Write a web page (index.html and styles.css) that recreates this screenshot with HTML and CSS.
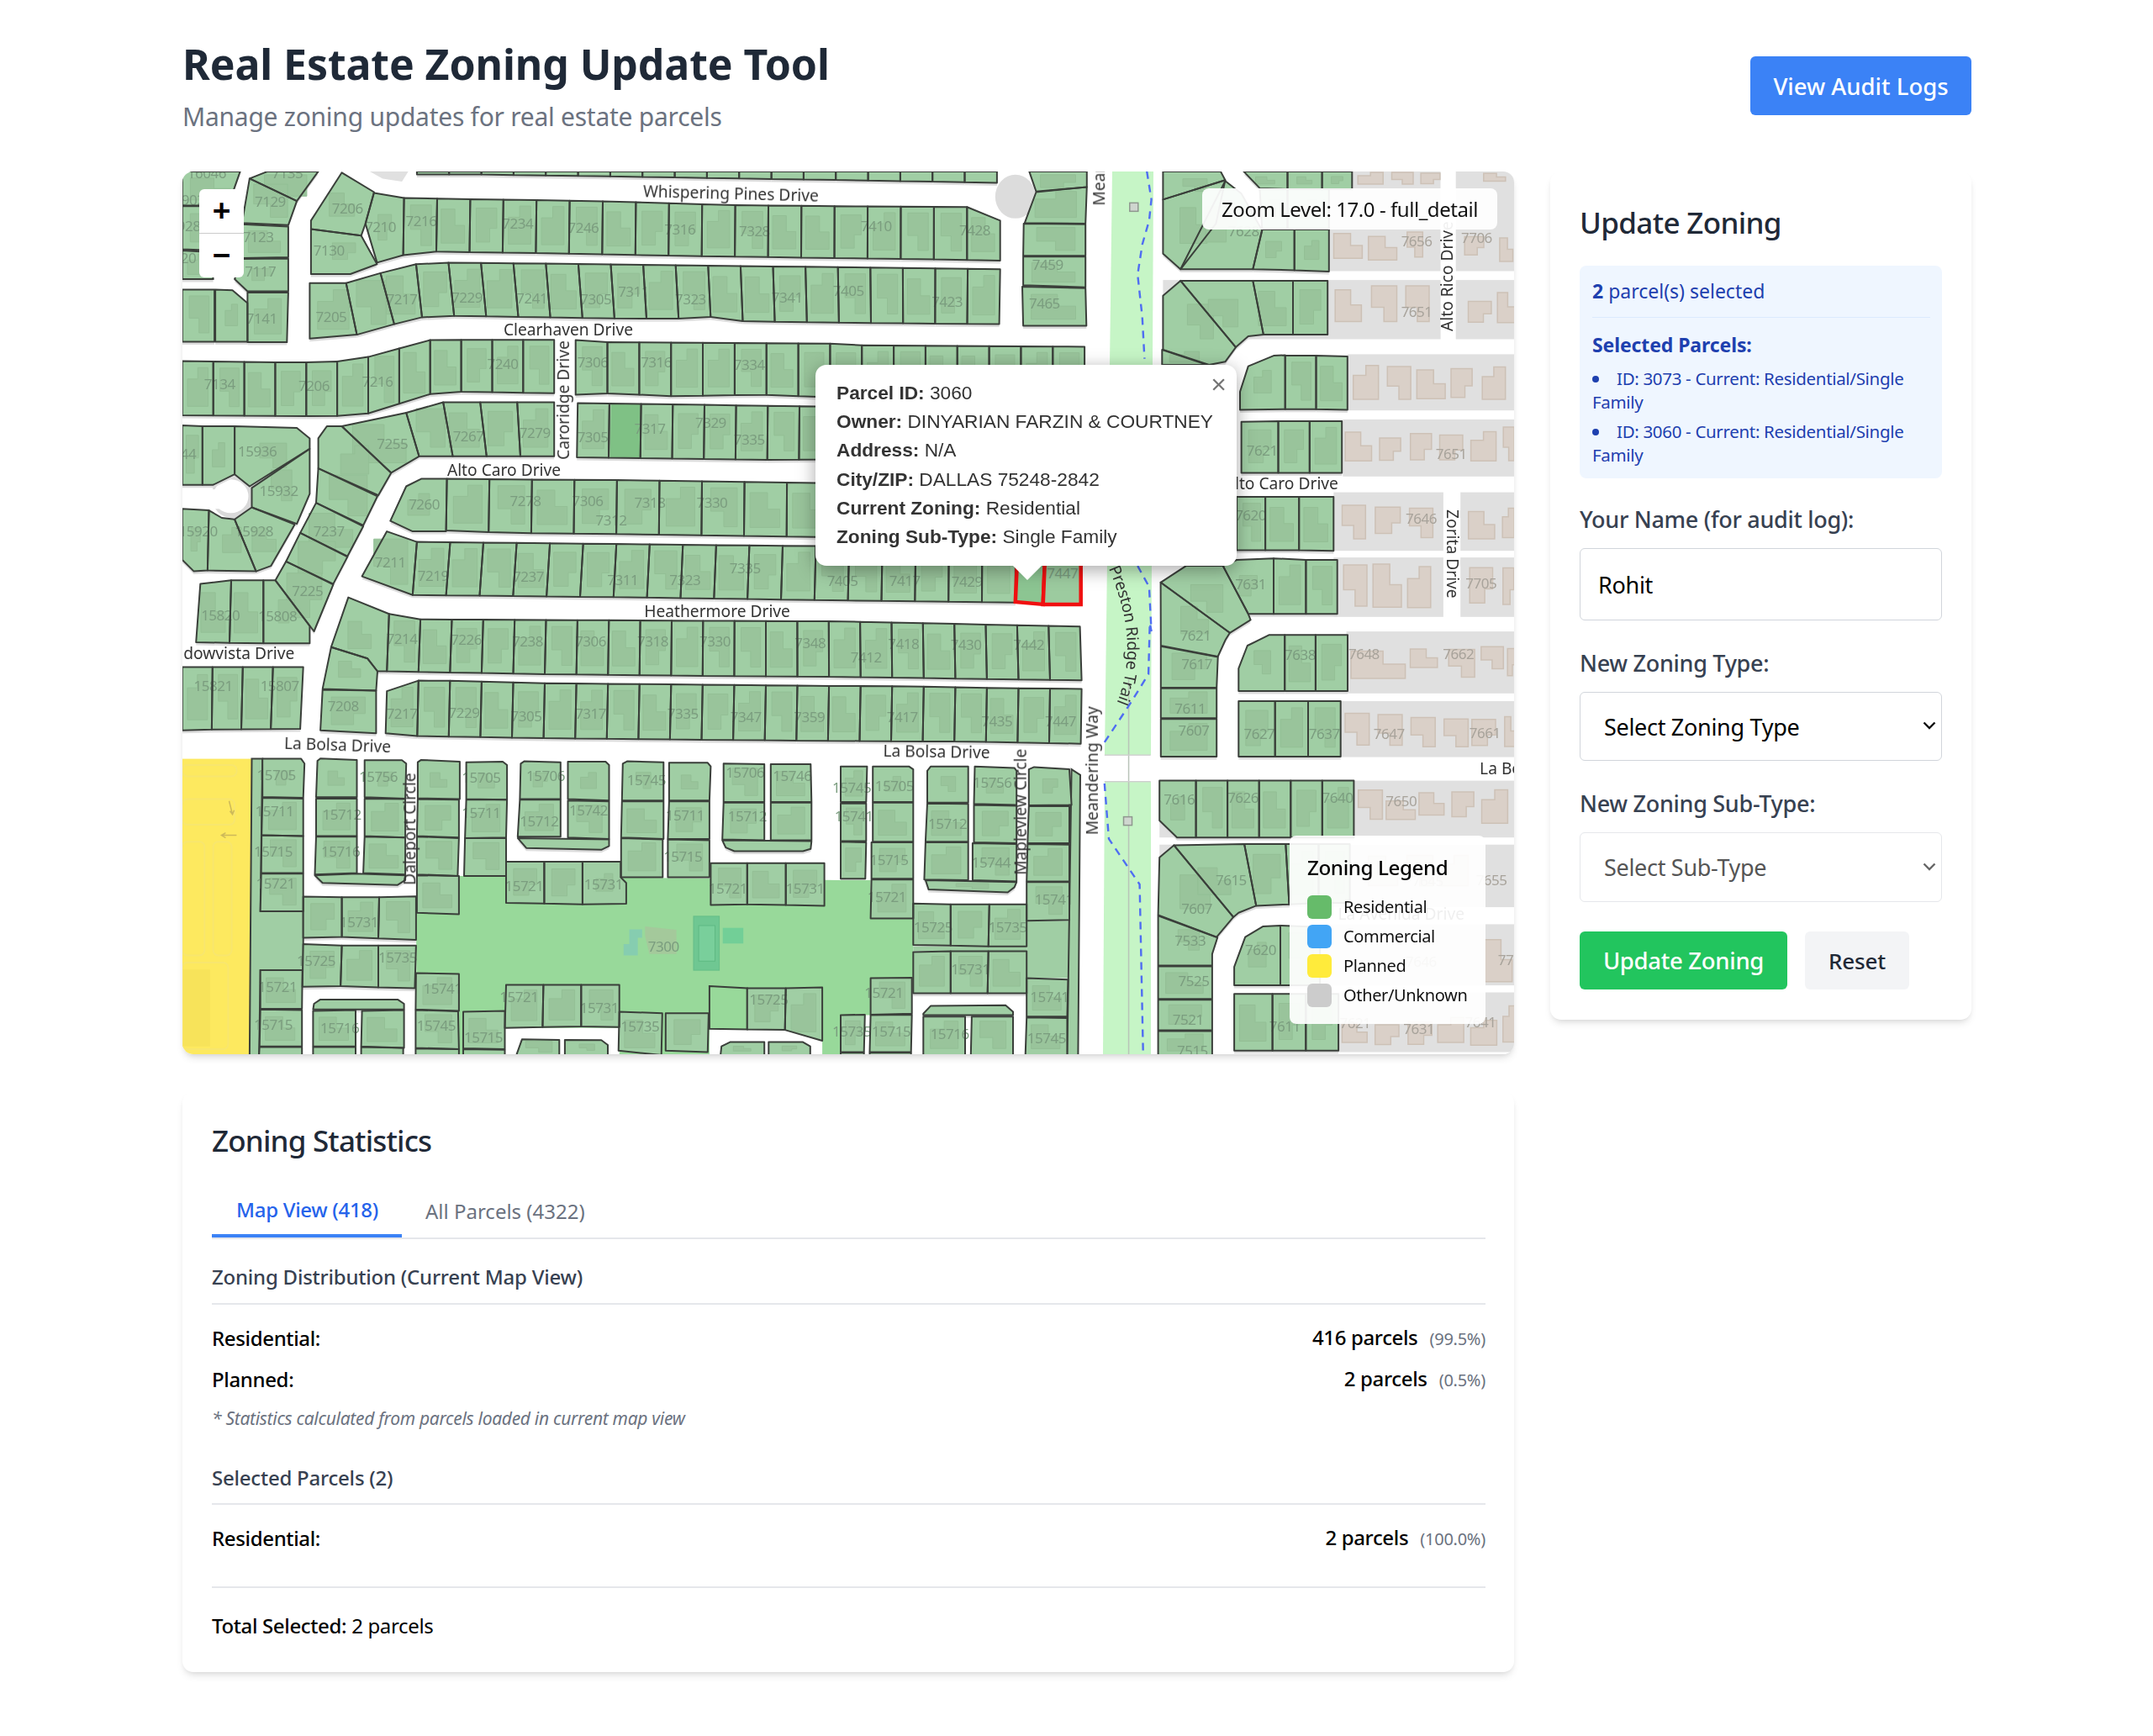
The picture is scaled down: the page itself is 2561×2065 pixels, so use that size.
FILE: index.html
```html
<!DOCTYPE html>
<html lang="en">
<head>
<meta charset="utf-8">
<title>Real Estate Zoning Update Tool</title>
<link rel="stylesheet" href="styles.css">
</head>
<body>
<div class="page">
  <header class="top">
    <div class="top-text">
      <h1>Real Estate Zoning Update Tool</h1>
      <p>Manage zoning updates for real estate parcels</p>
    </div>
    <button class="audit">View Audit Logs</button>
  </header>
  <div class="layout">
    <div class="left">
      <section class="map">
        <svg id="tiles" class="tiles" viewBox="217 203 1584 1050" xmlns="http://www.w3.org/2000/svg"></svg>
        <div class="zoomctl"><a class="zbtn">+</a><a class="zbtn">−</a></div>
        <div class="zoomlabel">Zoom Level: 17.0 - full_detail</div>
        <div class="popup">
          <span class="popup-close">×</span>
          <p><strong>Parcel ID:</strong> 3060</p>
          <p><strong>Owner:</strong> DINYARIAN FARZIN &amp; COURTNEY</p>
          <p><strong>Address:</strong> N/A</p>
          <p><strong>City/ZIP:</strong> DALLAS 75248-2842</p>
          <p><strong>Current Zoning:</strong> Residential</p>
          <p><strong>Zoning Sub-Type:</strong> Single Family</p>
        </div>
        <div class="legend">
          <h4>Zoning Legend</h4>
          <div class="leg-row"><i class="sw sw-res"></i>Residential</div>
          <div class="leg-row"><i class="sw sw-com"></i>Commercial</div>
          <div class="leg-row"><i class="sw sw-pla"></i>Planned</div>
          <div class="leg-row"><i class="sw sw-oth"></i>Other/Unknown</div>
        </div>
      </section>
      <section class="stats card">
        <h3>Zoning Statistics</h3>
        <div class="tabs">
          <a class="tab active">Map View (418)</a>
          <a class="tab">All Parcels (4322)</a>
        </div>
        <h4 class="sub first">Zoning Distribution (Current Map View)</h4>
        <div class="stat gap-first"><b>Residential:</b><span><b>416 parcels</b><small>(99.5%)</small></span></div>
        <div class="stat gap-next"><b>Planned:</b><span><b>2 parcels</b><small>(0.5%)</small></span></div>
        <p class="note">* Statistics calculated from parcels loaded in current map view</p>
        <h4 class="sub second">Selected Parcels (2)</h4>
        <div class="stat gap-sel"><b>Residential:</b><span><b>2 parcels</b><small>(100.0%)</small></span></div>
        <div class="total"><b>Total Selected:</b> 2 parcels</div>
      </section>
    </div>
    <aside class="side card">
      <h3>Update Zoning</h3>
      <div class="selbox">
        <div class="selcount"><b>2</b> parcel(s) selected</div>
        <div class="sellist">
          <div class="seltitle">Selected Parcels:</div>
          <ul>
            <li>ID: 3073 - Current: Residential/Single Family</li>
            <li>ID: 3060 - Current: Residential/Single Family</li>
          </ul>
        </div>
      </div>
      <label class="lab lab-first" for="nm">Your Name (for audit log):</label>
      <input id="nm" class="field name" value="Rohit">
      <label class="lab" for="zt">New Zoning Type:</label>
      <div class="selwrap">
        <select id="zt" class="field sel"><option>Select Zoning Type</option></select>
        <svg class="chev" viewBox="0 0 16 10" width="16" height="10"><path d="M1.5 1.5 L8 8 L14.5 1.5" fill="none" stroke="#111" stroke-width="2.4"/></svg>
      </div>
      <label class="lab" for="zs">New Zoning Sub-Type:</label>
      <div class="selwrap">
        <select id="zs" class="field sel sel-off" disabled><option>Select Sub-Type</option></select>
        <svg class="chev" viewBox="0 0 16 10" width="16" height="10"><path d="M1.5 1.5 L8 8 L14.5 1.5" fill="none" stroke="#666" stroke-width="2.4"/></svg>
      </div>
      <div class="actions">
        <button class="btn-go">Update Zoning</button>
        <button class="btn-reset">Reset</button>
      </div>
    </aside>
  </div>
</div>
<script src="map.js"></script>
</body>
</html>
```
FILE: styles.css
```css
* { box-sizing: border-box; }
html, body { margin: 0; background: #fff; }
body { font-family: "Noto Sans", "Open Sans", sans-serif; color: #000; }
.page { width: 2128px; margin: 0 0 0 217px; padding-bottom: 77px; }

.top { display: flex; justify-content: space-between; align-items: center; padding-top: 47px; margin-bottom: 47px; }
.top-text h1 { margin: 0; font-size: 50px; line-height: 58px; font-weight: 700; color: #1f2937; letter-spacing: -.1px; }
.top-text p { margin: 16px 0 0; font-size: 30px; line-height: 36px; color: #6b7280; letter-spacing: -.25px; }
.audit { width: 263px; height: 70px; border: 0; border-radius: 6px; background: #3b82f6; color: #fff; font: 500 27.5px "Noto Sans", sans-serif; letter-spacing: 0; }

.layout { display: grid; grid-template-columns: 1584px 501px; column-gap: 43px; align-items: start; }
.card { background: #fff; border-radius: 13px; box-shadow: 0 6px 10px -2px rgba(0,0,0,.1), 0 3px 6px -3px rgba(0,0,0,.1); }

.map { position: relative; height: 1050px; border-radius: 13px; overflow: hidden; box-shadow: 0 6px 10px -2px rgba(0,0,0,.12), 0 3px 6px -3px rgba(0,0,0,.1); }
.tiles { display: block; width: 1584px; height: 1050px; background: #fff; }
.t-num { font: 17px "Noto Sans", sans-serif; fill: #7b9d7f; letter-spacing: -.5px; text-anchor: middle; dominant-baseline: middle; }
.t-numb { fill: #a8a39b; }
.t-st { font: 19.2px "Noto Sans", sans-serif; fill: #333; text-anchor: middle; dominant-baseline: middle; }
.t-soft { filter: blur(.4px); }

.zoomctl { position: absolute; left: 20px; top: 21px; width: 53px; height: 105px; background: #fff; border-radius: 6px; display: flex; flex-direction: column; }
.zbtn { flex: 1; display: flex; align-items: center; justify-content: center; padding-bottom: 2px; font: 700 37px/1 "Liberation Sans", sans-serif; color: #000; }
.zbtn:first-child { border-bottom: 1.6px solid #ccc; }

.zoomlabel { position: absolute; left: 1213px; top: 20px; width: 351px; height: 49px; display: flex; align-items: center; justify-content: center; background: rgba(255,255,255,.93); border-radius: 8px; font-size: 24px; letter-spacing: -.45px; color: #111; }

.popup { position: absolute; left: 753px; top: 230px; width: 501px; height: 239px; padding: 16px 20px 0 25px; background: #fff; border-radius: 13px; box-shadow: 0 5px 22px rgba(0,0,0,.35); font-family: "Liberation Sans", Arial, sans-serif; font-size: 22.7px; color: #333; }
.popup::after { content: ""; position: absolute; left: 235px; top: 239px; border-left: 17px solid transparent; border-right: 17px solid transparent; border-top: 17px solid #fff; }
.popup p { margin: 0; line-height: 34.2px; white-space: nowrap; }
.popup strong { font-weight: 700; }
.popup-close { position: absolute; right: 12px; top: 5px; font: 32px/36px "Liberation Sans", sans-serif; color: #757575; }

.legend { position: absolute; left: 1317px; top: 790px; width: 233px; height: 224px; padding: 21px 21px; background: rgba(255,255,255,.92); border-radius: 8px; font-size: 20px; color: #111; }
.legend h4 { margin: 0 0 12px; font-size: 24.2px; line-height: 34px; font-weight: 500; letter-spacing: -.4px; color: #000; }
.leg-row { display: flex; align-items: center; gap: 14px; height: 35px; letter-spacing: -.35px; white-space: nowrap; }
.sw { width: 29px; height: 28px; border-radius: 6px; flex: none; }
.sw-res { background: #66bb6a; }
.sw-com { background: #42a5f5; }
.sw-pla { background: #ffeb3b; }
.sw-oth { background: #cccccc; }

.stats { margin-top: 45px; height: 690px; padding: 36px 34px 0 35px; }
.stats h3 { margin: 0; font-size: 35px; line-height: 44px; font-weight: 500; color: #1f2937; letter-spacing: -.82px; }
.tabs { display: flex; margin-top: 29px; height: 66px; border-bottom: 2px solid #e5e7eb; }
.tab { display: flex; align-items: center; height: 64px; padding: 0 28px; font-size: 24px; color: #6b7280; letter-spacing: 0; }
.tab.active { color: #2563eb; border-bottom: 4px solid #3b82f6; padding: 0 28px 0 29px; font-weight: 500; letter-spacing: -.3px; }
.sub { margin: 0; font-size: 24px; line-height: 34px; font-weight: 500; color: #374151; letter-spacing: -.22px; padding-bottom: 14px; border-bottom: 2px solid #e5e7eb; }
.sub.first { margin-top: 28px; }
.sub.second { margin-top: 39px; padding-bottom: 13px; }
.stat { display: flex; justify-content: space-between; align-items: center; font-size: 24px; line-height: 36px; letter-spacing: -.35px; }
.stat b, .total b { font-weight: 500; }
.stat small { font-size: 20px; color: #6b7280; margin-left: 14px; letter-spacing: -.25px; }
.gap-first { margin-top: 21px; }
.gap-next { margin-top: 11px; }
.gap-sel { margin-top: 21px; }
.note { margin: 12px 0 0; font-size: 21px; line-height: 30px; font-style: italic; color: #6b7280; letter-spacing: -.3px; }
.total { margin-top: 38px; padding-top: 28px; border-top: 2px solid #e5e7eb; font-size: 24px; line-height: 34px; letter-spacing: -.35px; }

.side { padding: 39px 35px 35px; height: 1009px; }
.side h3 { margin: 0; font-size: 35px; line-height: 44px; font-weight: 500; color: #1f2937; letter-spacing: -.65px; }
.selbox { margin-top: 29px; height: 253px; padding: 14px 14px 0 15px; background: #eff6ff; border-radius: 8px; color: #1e40af; }
.selcount { font-size: 23px; line-height: 32px; letter-spacing: 0; padding-bottom: 15px; border-bottom: 1.6px solid #dbeafe; }
.selcount b { font-weight: 700; }
.sellist { margin-top: 17px; }
.seltitle { font-size: 23px; line-height: 30px; font-weight: 700; letter-spacing: -.1px; }
.sellist ul { margin: 11px 0 0; padding: 0; list-style: none; }
.sellist li { font-size: 20.5px; line-height: 28px; letter-spacing: -.32px; margin-bottom: 7px; }
.sellist li::before { content: ""; display: inline-block; width: 8px; height: 8px; border-radius: 50%; background: #1e40af; margin: 0 21px 3px 0; }

.lab { display: block; margin-top: 34px; font-size: 27px; line-height: 34px; font-weight: 500; color: #374151; letter-spacing: -.3px; }
.lab-first { margin-top: 32px; }
.field { display: block; width: 431px; margin-top: 17px; background: #fff; border: 1.6px solid #d1d5db; border-radius: 6px; font-family: "Noto Sans", sans-serif; font-size: 27px; letter-spacing: -.3px; color: #000; }
.name { height: 86px; padding: 0 21px; }
.selwrap { position: relative; width: 431px; margin-top: 17px; }
.sel { appearance: none; -webkit-appearance: none; margin: 0; height: 82px; padding: 0 40px 0 28px; }
.sel-off { height: 83px; color: #555; border-color: #e5e7eb; opacity: 1; }
.chev { position: absolute; right: 7px; top: 50%; margin-top: -6px; }
.actions { display: flex; gap: 21px; margin-top: 35px; }
.actions button { height: 69px; border: 0; border-radius: 6px; font: 500 26px "Noto Sans", sans-serif; letter-spacing: -.2px; }
.actions .btn-go { width: 247px; background: #22c55e; color: #fff; font-size: 27.5px; letter-spacing: -.3px; }
.btn-reset { width: 124px; background: #f3f4f6; color: #1f2937; }
```
FILE: map.js
```js
(function () {
  var A = function (x, y) { return [200 + x / 1.96, 190 + y / 2.8]; };
  var B = function (x, y) { return [950 + x / 1.823, 190 + y / 2.8]; };
  var C = function (x, y) { return [200 + x / 1.96, 740 + y / 2.958]; };
  var D = function (x, y) { return [1000 + x / 1.912, 740 + y / 2.958]; };
  var FILL = '#a0cea4', BLD = '#99c49b', PARK = '#98d99a', LAND = '#e0e0e0', BEIGE = '#dad0c8';
  var cells = [];

  function conv(Z, n) { var o = []; for (var i = 0; i < n.length; i += 2) o.push(Z(n[i], n[i + 1])); return o; }
  function ptsStr(p) { return p.map(function (q) { return q[0].toFixed(1) + ',' + q[1].toFixed(1); }).join(' '); }
  function add(p, opt) { cells.push({ p: p, o: opt || {} }); }
  function polys(Z, list, opt) { list.forEach(function (n) { add(conv(Z, n), opt); }); }
  function interp(line, x) {
    if (x <= line[0][0]) return line[0][1];
    for (var i = 1; i < line.length; i++) {
      if (x <= line[i][0]) {
        var a = line[i - 1], b = line[i];
        return a[1] + (b[1] - a[1]) * (x - a[0]) / (b[0] - a[0] || 1);
      }
    }
    return line[line.length - 1][1];
  }
  function row(t, b, n) {
    var tl = t[0][0], tr = t[t.length - 1][0], bl = b[0][0], br = b[b.length - 1][0];
    for (var i = 0; i < n; i++) {
      var x0 = tl + (tr - tl) * i / n, x1 = tl + (tr - tl) * (i + 1) / n;
      var y0 = bl + (br - bl) * i / n, y1 = bl + (br - bl) * (i + 1) / n;
      add([[x0, interp(t, x0)], [x1, interp(t, x1)], [y1, interp(b, y1)], [y0, interp(b, y0)]]);
    }
  }
  var SH = [
    [.12, .18, .55, .18, .55, .5, .85, .5, .85, .85, .12, .85],
    [.2, .1, .85, .1, .85, .85, .52, .85, .52, .55, .2, .55],
    [.15, .32, .5, .32, .5, .1, .85, .1, .85, .85, .15, .85],
    [.18, .15, .82, .15, .82, .55, .6, .55, .6, .82, .18, .82]
  ];
  function shape(x, y, w, h, k, inset) {
    var s = SH[k % 4], o = [];
    inset = inset || 1;
    for (var i = 0; i < s.length; i += 2) {
      o.push([x + w * (.5 + (s[i] - .5) * inset), y + h * (.5 + (s[i + 1] - .5) * inset)]);
    }
    return o;
  }

  /* ---------- north blocks ---------- */
  polys(A, [
    [33,36,168,36,140,150,33,150],[33,152,128,152,108,300,33,295],[33,300,100,305,105,395,33,395],
    [190,60,232,36,350,36,300,135],[190,60,300,135,280,215,172,208],[172,212,280,220,280,322,172,325],
    [172,328,280,326,280,435,185,435,155,395],[185,440,280,440,277,605,185,605],[110,430,150,432,185,475,185,603,110,603],[33,430,108,430,108,603,33,603],
    [405,40,480,105,460,210,450,250,333,228,333,200],[480,108,550,125,548,315,487,340,460,210],[333,228,450,250,487,345,425,378,333,378],
    [330,408,415,408,440,580,330,593],[415,408,495,375,527,545,440,580],[495,375,578,345,592,522,527,545],
    [405,885,555,840,585,985,520,1040],[33,882,80,885,80,1080,33,1080],[80,885,155,885,155,1045,105,1080,80,1080],
    [155,885,300,890,330,925,330,960,190,1085,155,1045],[330,960,330,1110,300,1210,195,1155,195,1090],
    [195,1155,295,1212,240,1350,205,1368,155,1195],[33,1160,95,1165,92,1365,60,1368,33,1330],[95,1165,125,1190,155,1195,205,1368,92,1365],
    [350,925,370,885,405,885,520,1040,490,1115,350,1025],[350,1025,488,1118,455,1215,345,1140],[345,1140,455,1218,418,1318,308,1240],[308,1240,418,1320,385,1410,275,1335],
    [275,1335,385,1412,340,1568,250,1398],
    [590,1060,650,1060,648,1235,570,1235,518,1200,555,1085],[510,1235,580,1270,570,1447,452,1385]
  ]);
  add([A(75,1410),A(147,1398),C(143,70),C(65,68)]);
  add([A(147,1398),A(222,1398),C(222,72),C(143,70)]);
  add([A(222,1398),A(250,1398),A(330,1550),C(330,72),C(222,72)]);
  row([A(580,36),A(1568,36),B(430,36)], [A(580,46),A(700,46),A(1000,52),A(1568,65),B(430,74)], 18);
  row([A(550,125),A(1000,135),A(1305,148),A(1568,152),B(380,155),B(437,200)], [A(548,315),A(620,303),A(850,308),A(1000,312),A(1230,318),A(1568,325),B(270,328),B(437,333)], 18);
  row([A(578,345),A(660,340),A(1000,345),A(1260,350),A(1568,355),B(437,362)], [A(592,522),A(660,517),A(1000,525),A(1180,527),A(1260,520),A(1330,535),A(1568,540),B(435,545)], 18);
  row([A(33,668),A(230,672),A(380,672),A(450,660),A(520,635),A(595,598),A(680,597),A(900,597)], [A(33,848),A(380,852),A(460,845),A(610,778),A(680,770),A(900,775)], 12);
  row([A(950,598),A(1030,605),A(1568,610),B(130,615),B(620,620)], [A(950,780),A(1030,775),A(1175,785),A(1390,780),A(1568,790),B(620,792)], 16);
  row([A(555,840),A(625,805),A(900,805)], [A(585,985),A(900,985)], 4);
  row([A(955,808),A(1568,820),B(620,826)], [A(953,988),A(1030,990),A(1390,997),A(1568,995),B(620,1000)], 16);
  row([A(650,1060),A(1100,1065),A(1568,1075),B(620,1082)], [A(648,1232),A(795,1240),A(1100,1245),A(1568,1255),B(620,1262)], 15);
  row([A(580,1270),A(1568,1285),B(470,1292)], [A(570,1447),A(1100,1455),A(1568,1465),B(250,1468),B(470,1472)], 18);
  row([A(515,1510),A(580,1528),A(1568,1535),B(610,1552)], [C(510,170),C(870,180),C(1168,185),C(1568,190),D(548,202)], 22);
  add([A(420,1455),A(515,1510),C(510,170),C(488,170),C(465,125),C(380,85)]);
  polys(C, [[380,85,465,125,488,170,485,238,360,232],[360,235,485,238,485,388,355,378]]);
  row([C(510,240),C(545,203),C(650,203),C(870,212),C(1568,222),D(105,222),D(390,230),D(548,232)], [C(507,388),C(580,398),C(870,405),C(1165,410),C(1568,415),D(320,418),D(546,425)], 22);
  row([C(33,155),C(315,155)], [C(33,378),C(70,375),C(308,373)], 4);
  polys(B, [
    [500,36,625,36,625,88,515,103],[515,105,625,88,622,210,490,208],[488,210,622,212,622,317,487,317],[487,320,622,320,622,422,487,415],[485,420,622,425,624,550,487,550]
  ]);

  /* ---------- south blocks ---------- */
  polys(C, [
    [220,478,310,478,318,495,315,615,220,612],[220,615,315,618,315,750,218,747],[218,747,315,750,315,880,217,880],[217,882,315,882,315,1015,215,1015],
    [348,485,355,477,440,482,440,613,345,613],[458,483,545,483,555,495,553,618,458,613],[345,618,440,618,440,750,345,750],[458,618,553,620,553,755,458,750],
    [345,752,440,752,440,880,342,885],[458,752,553,755,553,885,455,880],[342,888,440,882,553,888,553,905,535,922,360,915],
    [315,963,405,965,405,1105,315,1108],[405,965,492,965,490,1110,405,1105],[492,965,578,962,578,1115,490,1110],
    [582,490,590,482,680,488,680,620,582,617],[695,490,780,488,790,500,790,622,695,620],[582,620,678,622,678,755,580,750],[695,622,790,622,788,755,692,757],
    [580,752,678,757,675,890,580,885],[692,757,788,757,788,890,690,890],[580,888,678,890,678,1025,580,1020],
    [822,495,830,487,915,490,915,620,820,620],[932,488,1020,488,1028,500,1028,625,932,620],[820,622,915,622,915,752,815,752],[932,625,1028,628,1028,760,932,755],
    [815,757,1028,762,1028,785,1010,798,835,792],
    [788,840,877,840,877,987,788,985],[877,840,966,840,966,990,877,987],[966,840,1055,840,1055,895,1068,915,1068,988,966,990],
    [1060,495,1070,487,1155,490,1155,625,1058,625],[1168,492,1258,492,1265,505,1262,625,1168,625],[1058,628,1155,628,1155,760,1056,755],[1168,628,1262,628,1262,760,1165,760],
    [1056,757,1153,762,1153,895,1056,895],[1165,762,1262,765,1262,895,1165,895],
    [1295,495,1390,497,1390,630,1295,630],[1405,497,1498,497,1500,630,1405,630],[1295,632,1390,632,1390,765,1292,762],[1405,632,1500,632,1500,765,1405,765],
    [1292,765,1500,768,1498,795,1480,803,1320,803,1300,790],
    [1265,845,1350,845,1350,990,1265,992],[1350,845,1440,845,1440,992,1350,990],[1440,845,1530,845,1530,995,1440,992],
    [315,1130,405,1135,402,1278,313,1280],[405,1135,490,1135,490,1282,402,1278],[490,1135,578,1135,575,1285,490,1282],
    [215,1222,313,1222,312,1358,215,1358],[215,1360,312,1362,312,1490,213,1490],[213,1492,312,1492,312,1520,212,1520],
    [578,1232,678,1235,678,1365,577,1360],[577,1362,676,1367,678,1500,577,1495],[577,1498,678,1500,678,1520,577,1520],
    [688,1368,785,1365,785,1500,688,1497],[688,1500,785,1502,785,1520,688,1520],
    [788,1273,875,1273,873,1422,785,1425],[875,1273,963,1273,963,1420,873,1422],[963,1273,1052,1273,1052,1422,963,1420],
    [1052,1368,1152,1373,1150,1520,1050,1505],[1160,1373,1260,1373,1258,1510,1160,1505],
    [1350,1285,1440,1285,1438,1432,1350,1430],[1440,1285,1525,1282,1525,1470,1438,1432],
    [340,1340,355,1325,535,1325,550,1340,550,1360,338,1360],[338,1365,437,1362,437,1490,338,1490],[452,1365,550,1362,550,1495,450,1490],[338,1492,437,1492,437,1520,338,1520],[450,1492,548,1495,548,1520,450,1520],
    [825,1465,912,1467,912,1520,812,1520],[925,1467,1010,1468,1025,1485,1025,1520,925,1520],[1310,1475,1390,1475,1390,1520,1288,1520,1290,1490],[1400,1475,1480,1475,1497,1490,1497,1520,1400,1520]
  ]);
  polys(D, [
    [73,505,155,505,165,515,165,630,73,630],[0,505,60,505,58,630,0,630],[0,635,58,635,58,768,0,768],[73,632,165,632,165,770,73,770],[70,772,165,772,165,900,70,900],[0,770,58,772,56,900,0,900],
    [70,903,165,903,165,1040,68,1040],
    [197,520,205,505,290,505,290,632,197,632],[305,505,395,510,400,520,400,640,303,637],[197,635,290,637,290,770,193,770],[303,640,400,643,400,775,303,772],[193,772,290,772,290,905,190,903],[300,775,400,778,400,910,300,905],[193,905,400,912,395,930,380,948,200,938],
    [165,987,250,990,250,1135,165,1133],[250,990,338,990,336,1138,250,1135],[338,990,423,990,423,1138,336,1138],
    [165,1158,250,1155,250,1303,165,1303],[250,1155,336,1155,334,1303,250,1303],[336,1155,423,1155,423,1303,334,1303],
    [428,515,440,507,520,515,525,640,428,642],[428,645,520,645,520,775,425,775],[425,778,520,780,520,910,423,910],[423,912,520,912,520,1045,423,1048],
    [423,1250,517,1255,515,1385,423,1385],[423,1388,515,1390,515,1520,420,1520],
    [205,1347,375,1345,392,1368,392,1380,188,1380,188,1375],[188,1385,283,1385,283,1520,188,1520],[298,1385,392,1385,392,1520,296,1520],
    [68,1250,162,1248,162,1375,68,1378],[68,1380,162,1378,160,1510,66,1510],[0,1380,55,1378,53,1510,0,1510],[66,1512,160,1512,160,1520,66,1520],[0,1512,53,1512,53,1520,0,1520]
  ]);

  /* ---------- east blocks ---------- */
  polys(B, [
    [790,36,915,36,925,65,790,130],[790,130,925,65,905,210,828,362,790,310],[925,68,960,110,1005,232,985,362,828,362],[1005,230,1075,230,1075,365,985,362],[1075,230,1150,230,1150,370,1075,365],
    [1000,95,1060,95,1060,230,1005,230],[965,36,1060,36,1060,95,1000,92],[1060,36,1135,36,1135,95,1060,95],[1135,36,1200,36,1200,95,1135,95],[1060,95,1150,95,1150,230,1060,230],
    [790,450,828,400,948,622,925,670,890,680,790,630],[828,400,985,400,1008,580,975,585,948,622],[985,400,1072,400,1072,580,1008,580],[1072,400,1147,400,1147,580,1072,580],[788,630,885,680,788,680],
    [957,770,975,685,1030,650,1055,648,1055,828,957,830],[1055,650,1122,650,1122,828,1055,828],[1122,650,1190,652,1190,830,1122,828],
    [960,870,1040,868,1040,1040,960,1040],[1040,868,1108,868,1108,1040,1040,1040],[1108,868,1178,868,1178,1040,1108,1040],
    [950,1120,1012,1120,1012,1298,950,1298],[1012,1120,1085,1120,1085,1298,1012,1298],[1085,1120,1160,1120,1160,1300,1085,1298],
    [950,1330,1030,1325,1030,1510,975,1510,920,1350],[1030,1325,1100,1330,1100,1510,1030,1510],[1100,1330,1168,1330,1168,1510,1100,1510]
  ]);
  add([B(785,1405),B(840,1350),B(920,1350),B(975,1510),B(980,1530),D(885,35)]);
  add([B(785,1405),D(885,35),D(875,60),D(858,118),D(728,80)]);
  polys(D, [
    [728,82,858,120,855,228,728,228],[728,230,855,230,855,335,728,335],[728,338,855,338,855,470,728,470],
    [905,240,905,160,925,80,975,42,1010,42,1010,240],[1010,42,1080,42,1080,240,1010,240],[1080,42,1153,42,1153,240,1080,240],
    [905,275,988,275,988,470,905,470],[988,275,1063,275,1063,470,988,470],[1063,275,1137,275,1137,470,1063,470],
    [725,825,758,782,893,1035,855,1105,722,1028],[758,782,918,778,945,995,905,1020,893,1035],[918,778,1012,778,1020,990,945,995],[1012,778,1087,778,1087,985,1020,990],[1087,778,1158,778,1158,985,1087,985],
    [722,1030,857,1107,845,1165,845,1205,722,1205],[722,1208,845,1208,845,1323,722,1323],[722,1326,845,1326,845,1433,722,1433],[722,1436,845,1436,845,1520,722,1520],
    [895,1275,895,1210,920,1105,960,1068,1000,1065,1000,1275],[1000,1065,1090,1070,1090,1275,1000,1275],
    [895,1305,982,1305,982,1505,895,1505],[982,1305,1058,1305,1058,1505,982,1505],[1058,1305,1132,1305,1132,1505,1058,1505]
  ]);
  polys(D, [[725,555,808,555,808,755,765,755,725,695]]);
  row([D(808,555),D(1167,555)], [D(808,755),D(1167,755)], 5);

  /* ---------- svg layers ---------- */
  var s = [];
  function rect(Z, x1, y1, x2, y2, fill, extra) {
    var a = Z(x1, y1), b = Z(x2, y2);
    s.push('<rect x="' + a[0].toFixed(1) + '" y="' + a[1].toFixed(1) + '" width="' + (b[0] - a[0]).toFixed(1) + '" height="' + (b[1] - a[1]).toFixed(1) + '" fill="' + fill + '" ' + (extra || '') + '/>');
  }
  function poly(p, fill, extra) { s.push('<polygon points="' + ptsStr(p) + '" fill="' + fill + '" ' + (extra || '') + '/>'); }

  /* land */
  [[1140,36,1392,368],[1425,36,1555,368],[790,398,1392,595],[1425,398,1555,595],[1190,645,1555,832],[1180,862,1555,1052],[1160,1105,1398,1300],[1435,1105,1555,1300],[1160,1322,1398,1520],[1435,1322,1555,1520]].forEach(function (r) { rect(B, r[0], r[1], r[2], r[3], LAND); });
  [[1150,30,1535,248],[1135,275,1535,472],[725,555,1535,755],[725,780,1535,1000],[1090,1060,1535,1275],[1130,1300,1535,1510]].forEach(function (r) { rect(D, r[0], r[1], r[2], r[3], LAND); });
  poly(conv(A, [470,36,560,36,545,70,500,60]), LAND);
  /* cul-de-sacs */
  var cd = B(470, 120);
  s.push('<ellipse cx="' + cd[0] + '" cy="' + cd[1] + '" rx="24" ry="26" fill="#dcdcdc"/>');
  var ce = A(150, 1118);
  s.push('<ellipse cx="' + ce[0] + '" cy="' + ce[1] + '" rx="25" ry="26" fill="#d9d9d9"/><ellipse cx="' + (ce[0] - 2) + '" cy="' + ce[1] + '" rx="21" ry="20" fill="#fff"/>');
  rect(A, 33, 1095, 130, 1160, '#fff');

  /* beige east buildings */
  function beige(Z, str) {
    str.split(';').forEach(function (e, i) {
      var v = e.trim().split(/\s+/).map(Number), a = Z(v[0], v[1]), b = Z(v[0] + v[2], v[1] + v[3]);
      poly(shape(a[0], a[1], b[0] - a[0], b[1] - a[1], i + v[0], 1.3), BEIGE, 'stroke="#cdc1b6" stroke-width="1.5"');
    });
  }
  beige(B, '1210 40 60 40;1280 40 55 40;1345 40 50 40;1485 40 50 30;1160 235 65 95;1235 245 65 90;1315 240 40 85;1440 250 50 70;1520 250 30 90;1163 420 60 122;1235 420 65 122;1310 420 60 122;1447 465 60 80;1515 430 40 115;1200 685 60 115;1270 688 60 112;1340 688 65 110;1410 688 55 110;1480 690 55 110;1185 895 60 110;1255 920 55 85;1322 905 55 100;1385 910 60 95;1455 905 60 100;1525 890 28 115;1172 1150 60 115;1245 1150 65 100;1318 1160 60 100;1452 1160 60 105;1525 1160 28 100;1175 1350 60 140;1245 1330 65 165;1318 1355 55 140;1450 1350 60 135;1525 1350 28 140');
  beige(D, '1160 90 130 110;1295 85 65 75;1375 95 70 100;1450 85 60 80;1515 85 20 110;1140 320 65 115;1215 325 65 110;1290 335 65 105;1365 340 65 100;1430 335 65 105;1510 320 25 120;1170 590 65 105;1240 620 70 75;1315 590 60 90;1385 590 60 100;1455 590 65 120;1200 810 70 120;1280 820 70 110;1360 820 70 110;1465 1100 65 170;1140 1400 60 80;1210 1410 65 80;1285 1400 65 90;1355 1390 65 90;1430 1400 65 90;1505 1350 30 130');

  /* shadow of parcel blocks */
  cells.forEach(function (c) {
    poly(c.p.map(function (q) { return [q[0], q[1] + 3.5]; }), '#dcdcdc');
  });

  /* park, trail and planned area */
  poly(conv(C, [580,890,790,890,1568,905]).concat(conv(D, [68,905,68,1040,165,1040,165,1250,68,1250,68,1380,0,1380,0,1520])).concat(conv(C, [1100,1520,580,1520,578,1020])), PARK);
  rect(C, 785, 1425, 1052, 1520, '#fff');
  rect(C, 1262, 1430, 1525, 1520, '#fff');
  poly(conv(D, [165,1138,423,1138,423,1155,165,1155]), FILL);
  poly(conv(D, [423,1048,540,1048,540,1250,423,1250]), FILL);
  poly(conv(C, [1262,1278,1350,1285,1350,1430,1262,1428]), PARK, 'stroke="#3a3f3a" stroke-width="2"');

  poly([[1323,203],[1372,203],[1369,897],[1314,897]], '#c6f5c6');
  poly([[1314,929],[1369,929],[1369,1253],[1312,1253]], '#c6f5c6');
  var gl = D(655, 200), gl2 = D(655, 1520);
  s.push('<path d="M' + gl[0] + ' ' + gl[1] + 'V' + gl2[1] + '" stroke="#b9c4b9" stroke-width="1.5" fill="none"/>');
  rect(D, 600, 463, 705, 467, '#cfcfcf');
  rect(D, 600, 556, 705, 560, '#cfcfcf');

  rect(C, 33, 478, 195, 1520, '#fde95f');
  rect(C, 33, 1220, 98, 1490, '#f7e35a');
  s.push('<g fill="none" stroke="#f8e66e" stroke-width="2">');
  [[33,500,160,540],[33,620,155,710],[33,770,85,1170],[105,770,148,1170],[33,1195,140,1500]].forEach(function (r) { var a = C(r[0], r[1]), b = C(r[2], r[3]); s.push('<rect x="' + a[0].toFixed(1) + '" y="' + a[1].toFixed(1) + '" width="' + (b[0] - a[0]).toFixed(1) + '" height="' + (b[1] - a[1]).toFixed(1) + '" rx="6"/>'); });
  s.push('</g>');
  var ar1 = C(150, 650), ar2 = C(140, 747);
  s.push('<path d="M' + (ar1[0] - 4) + ' ' + (ar1[1] - 8) + 'L' + ar1[0] + ' ' + (ar1[1] + 8) + 'M' + (ar1[0] - 3) + ' ' + (ar1[1] + 4) + 'L' + ar1[0] + ' ' + (ar1[1] + 8) + 'L' + (ar1[0] + 2) + ' ' + (ar1[1] + 3) + 'M' + (ar2[0] + 10) + ' ' + ar2[1] + 'H' + (ar2[0] - 8) + 'M' + (ar2[0] - 3) + ' ' + (ar2[1] - 3) + 'L' + (ar2[0] - 8) + ' ' + ar2[1] + 'L' + (ar2[0] - 3) + ' ' + (ar2[1] + 3) + '" stroke="#cdb95a" stroke-width="1.5" fill="none"/>');

  /* park details */
  poly(conv(C, [1075,1078,1105,1078,1105,1108,1095,1108,1095,1170,1062,1170,1062,1130,1075,1130]), '#86cdb0');
  poly(conv(C, [1112,1068,1185,1080,1185,1165,1122,1165,1112,1100]), '#a4c99b');
  rect(C, 1225, 1032, 1285, 1222, '#6fc792', 'stroke="#65be88" stroke-width="1"');
  rect(C, 1237, 1065, 1275, 1190, '#79cf9b', 'stroke="#5fb983" stroke-width="1"');
  rect(C, 1293, 1073, 1341, 1128, '#72cf97');

  /* strip parcel next to the planned area */
  poly(conv(C, [195,478,220,478,215,1015,315,1015,315,1222,215,1222,212,1520,190,1520]), FILL, 'stroke="#3a3f3a" stroke-width="2"');
  poly(conv(D, [525,515,545,535,540,1520,515,1520]), FILL, 'stroke="#3a3f3a" stroke-width="2"');

  /* parcel fills and their buildings */
  cells.forEach(function (c) { poly(c.p, FILL); });
  cells.forEach(function (c, i) {
    var xs = c.p.map(function (q) { return q[0]; }), ys = c.p.map(function (q) { return q[1]; });
    var x0 = Math.min.apply(null, xs), x1 = Math.max.apply(null, xs), y0 = Math.min.apply(null, ys), y1 = Math.max.apply(null, ys);
    var w = x1 - x0, h = y1 - y0;
    if (w < 14 || h < 14) return;
    var ins = c.p.length > 4 ? .55 : .95;
    if (x1 > 1380 && y0 < 280) ins = .6;
    poly(shape(x0, y0, w, h, (i * 7 + (i >> 2)), ins), BLD, 'stroke="#93bf95" stroke-width="1"');
  });
  poly([A(1033,812), A(1103,812), A(1103,990), A(1030,990)], '#7fc185');

  /* house numbers */
  function nums(Z, str, cls) {
    str.split(';').forEach(function (e) {
      var v = e.trim().split(/\s+/), p = Z(+v[1], +v[2]);
      s.push('<text class="t-num ' + (cls || '') + '" x="' + p[0].toFixed(1) + '" y="' + p[1].toFixed(1) + '">' + v[0] + '</text>');
    });
  }
  s.push('<g class="t-soft">');
  nums(A, '16046 90 45;7135 278 45;15902 40 135;15928 30 222;15920 20 330;7129 238 140;7123 210 260;7117 215 375;7141 218 530;7206 418 165;7210 495 225;7216 590 205;7234 815 215;7246 968 228;7316 1193 233;7328 1367 240;7130 375 303;7205 380 525;7217 545 465;7229 697 460;7241 848 463;7305 997 467;7311 1085 440;7323 1218 465;7341 1443 460;7134 120 750;7206 340 755;7216 488 740;7240 780 682;7306 990 677;7316 1138 677;7334 1355 685;7255 523 947;7267 700 923;7279 855 912;7305 990 925;7317 1123 897;7329 1265 877;7335 1355 933;15944 20 980;15936 208 973;15932 258 1105;15928 200 1240;15920 70 1238;7237 375 1240;7225 325 1437;15820 122 1520;15808 255 1522;7260 597 1150;7278 833 1138;7306 978 1137;7312 1033 1203;7318 1123 1143;7330 1268 1145;7211 518 1343;7219 618 1388;7237 840 1390;7311 1060 1400;7323 1205 1400;7335 1345 1362');
  nums(B, '7410 168 222;7428 382 237;7459 540 350;7405 108 437;7423 322 475;7465 533 480;7628 965 240;7621 1005 970;7620 980 1185;7631 980 1415;7405 95 1405;7417 230 1403;7429 365 1408');
  nums(C, '7214 545 60;7226 695 62;7238 838 70;7306 985 70;7318 1130 70;7330 1275 70;7348 1497 75;15821 105 225;15807 260 225;7208 408 298;7217 545 325;7229 690 320;7305 835 333;7317 985 325;7335 1200 325;7347 1347 335;7359 1495 335;15705 252 540;15756 490 545;15705 730 550;15706 880 543;15745 1115 558;15706 1345 532;15746 1455 542;15711 248 667;15712 405 680;15711 730 672;15712 865 702;15742 980 665;15711 1205 682;15712 1350 685;15715 245 808;15716 402 810;15715 1200 827;15721 250 920;15721 830 930;15731 1015 925;15721 1305 938;15731 1485 938;15731 445 1058;7300 1155 1142;15725 345 1193;15735 535 1183;15721 255 1285;15741 640 1292;15721 818 1320;15731 1005 1360;15725 1400 1328;15715 245 1418;15716 400 1430;15745 625 1422;15715 735 1463;15735 1100 1423');
  nums(D, '7412 58 127;7418 143 78;7430 285 80;7442 428 82;7417 140 335;7435 355 350;7447 500 350;15705 122 578;15745 25 583;15741 30 685;15756 345 567;15712 243 712;15715 110 837;15744 342 848;15721 105 970;15741 485 978;15725 210 1075;15735 380 1075;15731 295 1222;15721 98 1305;15741 475 1320;15716 248 1452;15715 115 1442;15745 468 1465;15735 25 1443;7621 807 48;7617 810 150;7611 795 307;7607 803 382;7638 1045 117;7627 952 395;7637 1100 395;7616 770 625;7626 915 620;7640 1130 620;7615 888 908;7607 810 1010;7533 795 1122;7525 803 1263;7521 790 1400;7515 800 1510;7620 955 1155;7611 1010 1425');
  nums(B, '7656 1340 272;7706 1470 262;7651 1340 507;7651 1415 980;7646 1350 1198;7705 1480 1413', 't-numb');
  nums(D, '7648 1190 115;7662 1405 115;7647 1247 395;7661 1465 392;7650 1275 630;7645 1335 912;7655 1480 908;7646 1320 1195;7721 1530 1190;7621 1170 1412;7631 1315 1432;7641 1455 1408', 't-numb');
  s.push('</g>');

  /* parcel outlines */
  s.push('<g fill="none" stroke="#3a3f3a" stroke-width="2" stroke-linejoin="round">');
  cells.forEach(function (c) { s.push('<polygon points="' + ptsStr(c.p) + '"/>'); });
  s.push('</g>');

  /* selected parcels */
  poly([B(475,1292), B(535,1292), B(530,1478), B(470,1470)], '#8cc592', 'stroke="#f01010" stroke-width="4.5"');
  poly([B(535,1292), B(612,1292), B(612,1478), B(530,1478)], '#9ccb9f', 'stroke="#f01010" stroke-width="4.5"');
  nums(B, '7447 572 1380');

  /* street names */
  function st(Z, text, x, y, rot, cls) {
    var p = Z(x, y);
    s.push('<text class="t-st ' + (cls || '') + '" x="' + p[0].toFixed(1) + '" y="' + p[1].toFixed(1) + '"' + (rot ? ' transform="rotate(' + rot + ' ' + p[0].toFixed(1) + ' ' + p[1].toFixed(1) + ')"' : '') + '>' + text + '</text>');
  }
  s.push('<g class="t-soft">');
  st(A, 'Whispering Pines Drive', 1312, 115, 1.5);
  st(A, 'Clearhaven Drive', 933, 568);
  st(A, 'Caroridge Drive', 925, 798, -90);
  st(A, 'Alto Caro Drive', 783, 1035);
  st(B, 'Alto Caro Drive', 1047, 1080);
  st(A, 'Heathermore Drive', 1280, 1507);
  st(C, 'Meadowvista Drive', 127, 113);
  st(C, 'La Bolsa Drive', 395, 433, 2);
  st(D, 'La Bolsa Drive', 218, 458, 1);
  st(D, 'La Bolsa Drive', 1575, 518);
  st(C, 'Daleport Circle', 567, 725, -90);
  st(D, 'Mapleview Circle', 412, 665, -90);
  st(D, 'Meandering Way', 575, 520, -90);
  st(B, 'Meandering Way', 655, -64, -90);
  st(B, 'Alto Rico Drive', 1408, 385, -90);
  st(B, 'Zorita Drive', 1415, 1310, 90);
  st(D, 'La Avenida Drive', 1275, 1030, 0);
  s.push('<path id="preston" d="M1321 668 Q1347 725 1346 775 Q1345 810 1331 842" fill="none"/>');
  s.push('<text class="t-st t-path"><textPath href="#preston" startOffset="50%">Preston Ridge Trail</textPath></text>');
  s.push('</g>');

  /* trail */
  var tr = [B(755,36),B(765,130),B(760,200),B(745,280),B(735,380),B(745,520),B(750,660)];
  var tr2 = [B(735,1350),B(760,1420),B(765,1568),D(703,0),D(700,180),D(660,280),D(600,420)];
  var tr3 = [D(600,565),D(610,760),D(680,920),D(688,1520)];
  function dash(l) { s.push('<polyline points="' + ptsStr(l) + '" fill="none" stroke="#4f6df2" stroke-width="2.4" stroke-dasharray="9 7"/>'); }
  dash(tr); dash(tr2); dash(tr3);
  [[B, 727, 155], [D, 653, 697]].forEach(function (m) {
    var p = m[0](m[1], m[2]);
    s.push('<rect x="' + (p[0] - 5) + '" y="' + (p[1] - 5) + '" width="10" height="10" fill="#cfd6cf" stroke="#8f978f" stroke-width="1.5"/>');
  });

  document.getElementById('tiles').innerHTML = s.join('');
})();
```
